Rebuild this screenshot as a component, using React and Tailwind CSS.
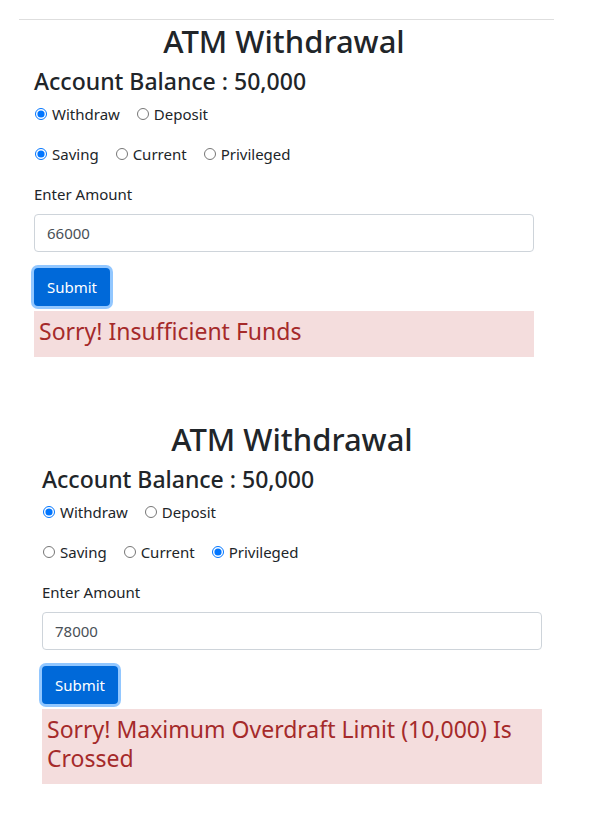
import React from "react";

function Radio({ checked, label, name }) {
  return (
    <label className="inline-flex items-center mr-[16px]">
      <input type="radio" name={name} defaultChecked={checked} className="m-0 ml-[1px] mr-[5px] w-[12px] h-[12px]" />
      <span>{label}</span>
    </label>
  );
}

function Form({ id, amount, type, message }) {
  return (
    <div className="w-[500px]">
      <h2 className="text-center text-[31px] leading-[38px] font-medium text-[#212529]">ATM Withdrawal</h2>
      <h4 className="mt-[7px] text-[23px] leading-[29px] font-medium text-[#212529]">Account Balance : 50,000</h4>
      <div className="mt-[6px] h-[24px] flex items-center text-[15px] text-[#212529]">
        <Radio name={"t" + id} checked label="Withdraw" />
        <Radio name={"t" + id} label="Deposit" />
      </div>
      <div className="mt-[16px] h-[24px] flex items-center text-[15px] text-[#212529]">
        <Radio name={"a" + id} checked={type === "Saving"} label="Saving" />
        <Radio name={"a" + id} checked={type === "Current"} label="Current" />
        <Radio name={"a" + id} checked={type === "Privileged"} label="Privileged" />
      </div>
      <div className="mt-[16px] h-[24px] flex items-center text-[15px] text-[#212529]">Enter Amount</div>
      <div className="mt-[8px] h-[38px] border border-[#ced4da] rounded-[4px] flex items-center px-[12px] text-[15px] text-[#495057]">
        {amount}
      </div>
      <div className="mt-[16px] w-[76px] h-[38px] rounded-[4px] bg-[#0069d9] text-white text-[15px] flex items-center justify-center shadow-[0_0_0_3px_rgba(38,143,255,0.5)]">
        Submit
      </div>
      <div className="mt-[5px] bg-[#f4dddd] text-[#a52a2a] text-[23px] leading-[29px] px-[5px] pt-[6px] pb-[11px]">
        {message}
      </div>
    </div>
  );
}

export default function App() {
  return (
    <div className="bg-white w-[596px] h-[822px]" style={{ fontFamily: '"Segoe UI", "Noto Sans", sans-serif' }}>
      <div className="pt-[19px]">
        <div className="ml-[19px] w-[535px] border-t border-[#dedede]"></div>
        <div className="ml-[34px] mt-[2px]">
          <Form id="1" amount="66000" type="Saving" message="Sorry! Insufficient Funds" />
        </div>
        <div className="ml-[42px] mt-[63px]">
          <Form id="2" amount="78000" type="Privileged" message="Sorry! Maximum Overdraft Limit (10,000) Is Crossed" />
        </div>
      </div>
    </div>
  );
}
